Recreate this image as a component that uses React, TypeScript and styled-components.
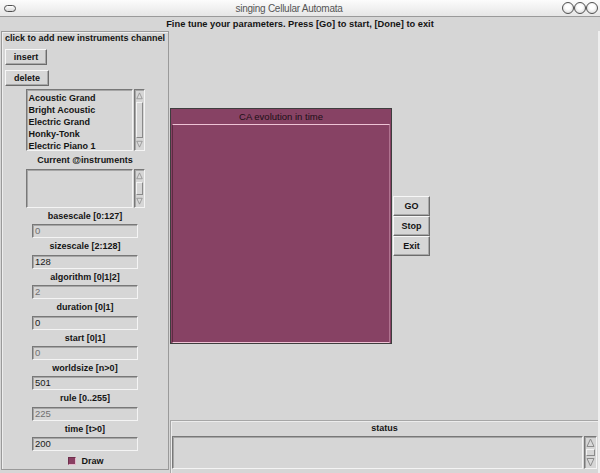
import React from 'react';
import styled, { createGlobalStyle } from 'styled-components';

const GlobalStyle = createGlobalStyle`
  html, body { margin: 0; padding: 0; background: #d6d6d6; }
  body { font-family: "Liberation Sans", Arial, sans-serif; }
  * { box-sizing: border-box; }
`;

const BG = '#d6d6d6';
const MAROON = '#874264';

const Window = styled.div`
  width: 600px;
  height: 473px;
  display: flex;
  flex-direction: column;
  background: ${BG};
  overflow: hidden;
  font-family: "Liberation Sans", Arial, sans-serif;
  font-size: 9px;
  font-weight: bold;
  color: #141414;
`;

const TitleBar = styled.div`
  height: 17px;
  display: flex;
  align-items: center;
  padding: 0 2px 0 4px;
  background: linear-gradient(#fcfcfc, #e6e6e6);
  border-bottom: 1px solid #9a9a9a;
`;

const MenuIcon = styled.div`
  width: 12px;
  height: 7px;
  border: 1px solid #4e4e4e;
  border-radius: 4px;
  background: linear-gradient(#ffffff, #d8d8d8);
`;

const TitleText = styled.div`
  flex: 1;
  text-align: center;
  font-size: 10px;
  font-weight: normal;
  letter-spacing: -0.25px;
  color: #555;
`;

const TitleButtons = styled.div`
  display: flex;
`;

const TitleCircle = styled.div`
  width: 12px;
  height: 12px;
  border-radius: 50%;
  border: 1px solid #505050;
  background: radial-gradient(circle at 50% 40%, #ffffff 30%, #cfcfcf 100%);
`;

const Header = styled.div`
  height: 14px;
  line-height: 14px;
  text-align: center;
  font-size: 9.3px;
`;

const Body = styled.div`
  flex: 1;
  display: flex;
  min-height: 0;
  border-right: 2px solid #efefef;
`;

const LeftPanel = styled.div`
  width: 168px;
  margin: 0 0 3px 1px;
  display: flex;
  flex-direction: column;
  align-items: center;
  border: 1px solid #9a9a9a;
  box-shadow: inset 1px 1px 0 #eeeeee;
`;

const PanelLabel = styled.div<{ $h: number }>`
  align-self: stretch;
  height: ${(p) => p.$h}px;
  line-height: ${(p) => p.$h}px;
  text-align: center;
  white-space: nowrap;
`;

const RaisedButton = styled.button<{ $w: number; $h: number }>`
  width: ${(p) => p.$w}px;
  height: ${(p) => p.$h}px;
  padding: 0;
  font: inherit;
  color: #141414;
  background: ${BG};
  border: 1px solid;
  border-color: #f7f7f7 #6c6c6c #6c6c6c #f7f7f7;
  box-shadow: inset -1px -1px 0 #a8a8a8;
  cursor: default;
`;

const SideButton = styled(RaisedButton)`
  align-self: flex-start;
  margin-left: 3px;
`;

const ListRow = styled.div<{ $h: number }>`
  display: flex;
  gap: 1px;
  height: ${(p) => p.$h}px;
`;

const Sunken = styled.div`
  border: 1px solid;
  border-color: #787878 #f4f4f4 #f4f4f4 #787878;
  box-shadow: inset 1px 1px 0 #a6a6a6;
  background: ${BG};
`;

const ListArea = styled(Sunken)`
  width: 107px;
  padding: 2px 0 0 2px;
  overflow: hidden;
`;

const ListItem = styled.div`
  height: 12px;
  line-height: 12px;
  white-space: nowrap;
`;

const ScrollTrack = styled(Sunken)<{ $w: number }>`
  width: ${(p) => p.$w}px;
  display: flex;
  flex-direction: column;
  align-items: stretch;
  padding: 1px;
`;

const ArrowBox = styled.div`
  height: 10px;
  display: flex;
  justify-content: center;
  flex-shrink: 0;
`;

const Thumb = styled.div`
  flex: 1;
  margin: 1px 0;
  border: 1px solid;
  border-color: #f4f4f4 #8a8a8a #8a8a8a #f4f4f4;
`;

const Arrow = ({ down }: { down?: boolean }) => (
  <ArrowBox>
    <svg width="9" height="10" viewBox="0 0 9 10">
      {down ? (
        <polygon points="1,1.5 8,1.5 4.5,9" fill="#d9d9d9" stroke="#8c8c8c" strokeWidth="1" />
      ) : (
        <polygon points="4.5,1 8,8.5 1,8.5" fill="#d9d9d9" stroke="#8c8c8c" strokeWidth="1" />
      )}
    </svg>
  </ArrowBox>
);

const Scrollbar = ({ w }: { w: number }) => (
  <ScrollTrack $w={w}>
    <Arrow />
    <Thumb />
    <Arrow down />
  </ScrollTrack>
);

const ParamGroup = styled.div`
  display: flex;
  flex-direction: column;
  align-items: center;
  height: 30.45px;
`;

const ParamLabel = styled.div`
  height: 16.45px;
  line-height: 16px;
  white-space: nowrap;
`;

const Entry = styled(Sunken)<{ $dim: boolean }>`
  width: 106px;
  height: 14px;
  line-height: 12px;
  padding-left: 2px;
  font-size: 9.5px;
  font-weight: normal;
  color: ${(p) => (p.$dim ? '#707070' : '#1a1a1a')};
`;

const CheckRow = styled.div`
  display: flex;
  align-items: center;
  gap: 5px;
  height: 16px;
  margin-top: 2px;
  padding-left: 2px;
`;

const CheckBox = styled.span`
  width: 8px;
  height: 8px;
  background: #8a3f62;
  border: 1px solid;
  border-color: #6e2f4c #e4b9cc #e4b9cc #6e2f4c;
`;

const RightArea = styled.div`
  flex: 1;
  display: flex;
  flex-direction: column;
  min-width: 0;
`;

const Stage = styled.div`
  flex: 1;
  display: flex;
  align-items: center;
  padding-left: 1px;
`;

const CAFrame = styled.div`
  width: 222px;
  height: 236px;
  display: flex;
  flex-direction: column;
  background: ${MAROON};
  border: 1px solid #3e3e3e;
`;

const CATitle = styled.div`
  height: 15px;
  line-height: 15px;
  text-align: center;
  font-size: 9.5px;
  font-weight: normal;
  color: #1c0f15;
`;

const CACanvas = styled.div`
  flex: 1;
  margin: 0 1px 0 1px;
  background: ${MAROON};
  border-top: 1px solid #eec3d5;
  border-bottom: 1px solid #eec3d5;
  border-left: 1px solid #5e2a43;
  border-right: 1px solid #b07390;
`;

const ButtonColumn = styled.div`
  display: flex;
  flex-direction: column;
  margin-left: 1px;
`;

const StatusFrame = styled.div`
  height: 53px;
  margin-left: 1px;
  display: flex;
  flex-direction: column;
  border-top: 1px solid #a6a6a6;
  border-left: 1px solid #a6a6a6;
  box-shadow: inset 1px 1px 0 #ececec;
`;

const StatusLabel = styled.div`
  height: 15px;
  line-height: 15px;
  text-align: center;
`;

const StatusRow = styled.div`
  display: flex;
  gap: 1px;
  height: 33px;
  padding: 0 1px;
`;

const StatusText = styled(Sunken)`
  flex: 1;
`;

const instruments = ['Acoustic Grand', 'Bright Acoustic', 'Electric Grand', 'Honky-Tonk', 'Electric Piano 1'];

const params: [string, string][] = [
  ['basescale [0:127]', '0'],
  ['sizescale [2:128]', '128'],
  ['algorithm [0|1|2]', '2'],
  ['duration [0|1]', '0'],
  ['start [0|1]', '0'],
  ['worldsize [n>0]', '501'],
  ['rule [0..255]', '225'],
  ['time [t>0]', '200'],
];

export default function App() {
  return (
    <Window>
      <GlobalStyle />
      <TitleBar>
        <MenuIcon />
        <TitleText>singing Cellular Automata</TitleText>
        <TitleButtons>
          <TitleCircle />
          <TitleCircle />
          <TitleCircle />
        </TitleButtons>
      </TitleBar>
      <Header>Fine tune your parameters. Press [Go] to start, [Done] to exit</Header>
      <Body>
        <LeftPanel>
          <PanelLabel $h={13}>click to add new instruments channel</PanelLabel>
          <SideButton $w={42} $h={16} style={{ marginTop: 4 }}>insert</SideButton>
          <SideButton $w={44} $h={17} style={{ marginTop: 5 }}>delete</SideButton>
          <ListRow $h={62} style={{ marginTop: 3 }}>
            <ListArea>
              {instruments.map((i) => (
                <ListItem key={i}>{i}</ListItem>
              ))}
            </ListArea>
            <Scrollbar w={11} />
          </ListRow>
          <PanelLabel $h={18}>Current @instruments</PanelLabel>
          <ListRow $h={39}>
            <ListArea />
            <Scrollbar w={11} />
          </ListRow>
          {params.map(([label, value], idx) => (
            <ParamGroup key={label}>
              <ParamLabel>{label}</ParamLabel>
              <Entry $dim={idx % 2 === 0}>{value}</Entry>
            </ParamGroup>
          ))}
          <CheckRow>
            <CheckBox />
            <span>Draw</span>
          </CheckRow>
        </LeftPanel>
        <RightArea>
          <Stage>
            <CAFrame>
              <CATitle>CA evolution in time</CATitle>
              <CACanvas />
            </CAFrame>
            <ButtonColumn>
              <RaisedButton $w={37} $h={20}>GO</RaisedButton>
              <RaisedButton $w={37} $h={20}>Stop</RaisedButton>
              <RaisedButton $w={37} $h={20}>Exit</RaisedButton>
            </ButtonColumn>
          </Stage>
          <StatusFrame>
            <StatusLabel>status</StatusLabel>
            <StatusRow>
              <StatusText />
              <Scrollbar w={13} />
            </StatusRow>
          </StatusFrame>
        </RightArea>
      </Body>
    </Window>
  );
}
